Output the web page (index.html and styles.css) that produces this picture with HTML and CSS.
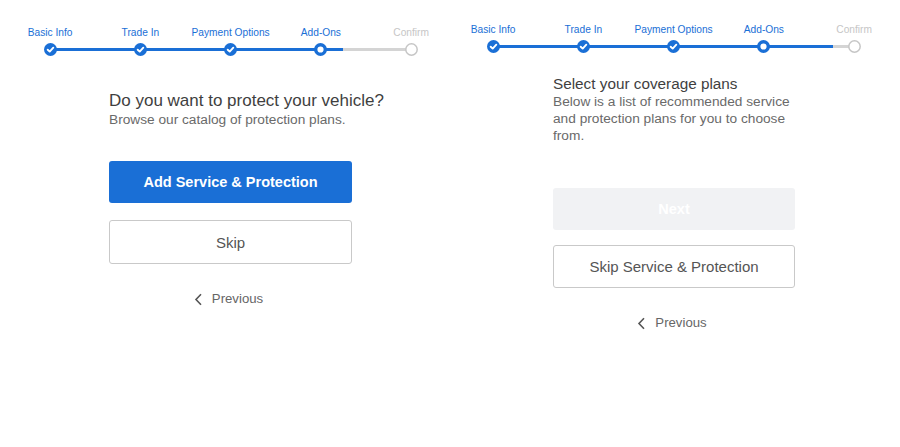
FILE: index.html
```html
<!DOCTYPE html>
<html lang="en">
<head>
  <meta charset="UTF-8" />
  <meta name="viewport" content="width=device-width, initial-scale=1.0"/>
  <title>Add-Ons</title>
  <link rel="stylesheet" href="styles.css">
</head>
<body>
  <main class="screens">
    <!-- Step: intro -->
    <section class="screen screen-intro">
      <ol class="stepper" aria-label="Progress">
        <div class="stepper-track"></div>
        <div class="stepper-progress" style="width: 293px"></div>
        <li class="step is-done">
          <span class="step-label">Basic Info</span>
          <svg class="step-dot" viewBox="0 0 13 13"><circle cx="6.5" cy="6.5" r="6.5"/><path d="M3.7 6.7 5.7 8.6 9.3 4.7"/></svg>
        </li>
        <li class="step is-done">
          <span class="step-label">Trade In</span>
          <svg class="step-dot" viewBox="0 0 13 13"><circle cx="6.5" cy="6.5" r="6.5"/><path d="M3.7 6.7 5.7 8.6 9.3 4.7"/></svg>
        </li>
        <li class="step is-done">
          <span class="step-label">Payment Options</span>
          <svg class="step-dot" viewBox="0 0 13 13"><circle cx="6.5" cy="6.5" r="6.5"/><path d="M3.7 6.7 5.7 8.6 9.3 4.7"/></svg>
        </li>
        <li class="step is-current" aria-current="step">
          <span class="step-label">Add-Ons</span>
          <svg class="step-dot" viewBox="0 0 13 13"><circle cx="6.5" cy="6.5" r="4.8"/></svg>
        </li>
        <li class="step is-todo">
          <span class="step-label">Confirm</span>
          <svg class="step-dot" viewBox="0 0 13 13"><circle cx="6.5" cy="6.5" r="5.7"/></svg>
        </li>
      </ol>

      <div class="screen-body">
        <h2 class="title">Do you want to protect your vehicle?</h2>
        <p class="lead">Browse our catalog of protection plans.</p>
        <button class="btn btn-primary">Add Service &amp; Protection</button>
        <button class="btn btn-outline">Skip</button>
        <a class="back-link" href="#">
          <svg viewBox="0 0 9 13"><path d="M7 1.2 2 6.5l5 5.3"/></svg>
          Previous
        </a>
      </div>
    </section>

    <!-- Step: coverage plans -->
    <section class="screen screen-plans">
      <ol class="stepper" aria-label="Progress">
        <div class="stepper-track"></div>
        <div class="stepper-progress" style="width: 340px"></div>
        <li class="step is-done">
          <span class="step-label">Basic Info</span>
          <svg class="step-dot" viewBox="0 0 13 13"><circle cx="6.5" cy="6.5" r="6.5"/><path d="M3.7 6.7 5.7 8.6 9.3 4.7"/></svg>
        </li>
        <li class="step is-done">
          <span class="step-label">Trade In</span>
          <svg class="step-dot" viewBox="0 0 13 13"><circle cx="6.5" cy="6.5" r="6.5"/><path d="M3.7 6.7 5.7 8.6 9.3 4.7"/></svg>
        </li>
        <li class="step is-done">
          <span class="step-label">Payment Options</span>
          <svg class="step-dot" viewBox="0 0 13 13"><circle cx="6.5" cy="6.5" r="6.5"/><path d="M3.7 6.7 5.7 8.6 9.3 4.7"/></svg>
        </li>
        <li class="step is-current" aria-current="step">
          <span class="step-label">Add-Ons</span>
          <svg class="step-dot" viewBox="0 0 13 13"><circle cx="6.5" cy="6.5" r="4.8"/></svg>
        </li>
        <li class="step is-todo">
          <span class="step-label">Confirm</span>
          <svg class="step-dot" viewBox="0 0 13 13"><circle cx="6.5" cy="6.5" r="5.7"/></svg>
        </li>
      </ol>

      <div class="screen-body">
        <h2 class="title title-small">Select your coverage plans</h2>
        <p class="lead">Below is a list of recommended service and protection plans for you to choose from.</p>
        <button class="btn btn-disabled" disabled>Next</button>
        <button class="btn btn-outline">Skip Service &amp; Protection</button>
        <a class="back-link" href="#">
          <svg viewBox="0 0 9 13"><path d="M7 1.2 2 6.5l5 5.3"/></svg>
          Previous
        </a>
      </div>
    </section>
  </main>
</body>
</html>
```

FILE: styles.css
```css
:root {
  --color-primary: #1a6fd6;
  --color-track: #d4d4d4;
  --color-title: #3f3f3f;
  --color-text: #6a6a6a;
  --color-muted: #c6c6c6;
  --color-border: #c9c9c9;
  --color-disabled: #f1f2f4;
}

body {
  margin: 0;
  font-family: "Liberation Sans", Arial, sans-serif;
  background: #fff;
  color: var(--color-text);
}

.screens {
  display: flex;
}

.screen {
  width: 443px;
  flex-shrink: 0;
}

.screen-intro {
  padding-top: 26px;
}

.screen-plans {
  padding-top: 23px;
}

/* progress stepper */
.stepper {
  position: relative;
  display: grid;
  grid-template-columns: repeat(5, 90.25px);
  margin: 0 0 0 5px;
  padding: 0;
  list-style: none;
}

.stepper-track,
.stepper-progress {
  position: absolute;
  top: 22px;
  left: 45px;
  height: 3px;
}

.stepper-track {
  width: 361px;
  background: var(--color-track);
}

.stepper-progress {
  background: var(--color-primary);
}

.step {
  position: relative;
  display: flex;
  flex-direction: column;
  align-items: center;
  gap: 3px;
}

.step-label {
  font-size: 10.2px;
  line-height: 14px;
  color: var(--color-primary);
  white-space: nowrap;
}

.step-dot {
  width: 13px;
  height: 13px;
  display: block;
}

.is-done .step-dot circle {
  fill: var(--color-primary);
}

.is-done .step-dot path {
  fill: none;
  stroke: #fff;
  stroke-width: 1.9;
  stroke-linecap: round;
  stroke-linejoin: round;
}

.is-current .step-dot circle {
  fill: #fff;
  stroke: var(--color-primary);
  stroke-width: 3.4;
}

.is-todo .step-label {
  color: var(--color-muted);
}

.is-todo .step-dot circle {
  fill: #fff;
  stroke: var(--color-muted);
  stroke-width: 1.5;
}

/* body */
.screen-body {
  width: 243px;
  margin-left: 109px;
  display: flex;
  flex-direction: column;
}

.screen-plans .screen-body {
  width: 242px;
  margin-left: 110px;
}

.title {
  margin: 0;
  font-size: 17px;
  line-height: 20px;
  font-weight: normal;
  color: var(--color-title);
  white-space: nowrap;
}

.screen-intro .title {
  margin-top: 35px;
}

.title-small {
  margin-top: 21px;
  font-size: 15.3px;
  line-height: 19px;
}

.lead {
  margin: 0;
  font-size: 13.7px;
  line-height: 17px;
  color: var(--color-text);
}

.btn {
  font-family: inherit;
  font-size: 15px;
  border-radius: 3px;
  cursor: pointer;
  width: 100%;
}

.btn-primary {
  margin-top: 33px;
  height: 42px;
  border: none;
  background: var(--color-primary);
  color: #fff;
  font-size: 14.5px;
  font-weight: bold;
}

.btn-disabled {
  margin-top: 44px;
  height: 42px;
  border: none;
  background: var(--color-disabled);
  color: #fff;
  font-size: 14.5px;
  font-weight: bold;
  cursor: default;
}

.btn-outline {
  height: 44px;
  margin-top: 17px;
  border: 1px solid var(--color-border);
  background: #fff;
  color: #555;
}

.screen-plans .btn-outline {
  margin-top: 15px;
  height: 43px;
}

.back-link {
  align-self: center;
  display: flex;
  align-items: center;
  gap: 9px;
  margin-top: 25px;
  margin-left: -4px;
  font-size: 13.2px;
  line-height: 20px;
  color: #666;
  text-decoration: none;
}

.back-link svg {
  width: 9px;
  height: 13px;
  fill: none;
  stroke: #555;
  stroke-width: 1.6;
}
```
